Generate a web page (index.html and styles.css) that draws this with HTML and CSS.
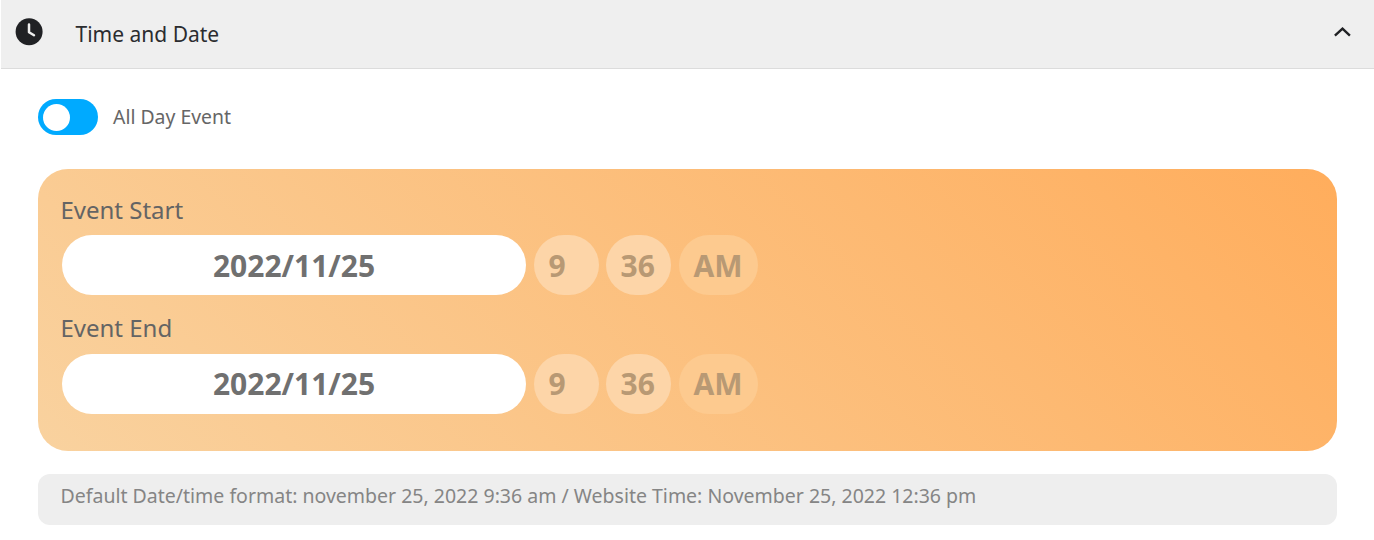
FILE: index.html
```html
<!DOCTYPE html>
<html lang="en">
<head>
<meta charset="utf-8">
<title>Time and Date</title>
<link rel="stylesheet" href="styles.css">
</head>
<body>
<section class="panel">
  <header class="panel-header">
    <svg class="clock" viewBox="0 0 28 28"><circle cx="14.1" cy="13.8" r="13.5" fill="#202124"/><path d="M14 6.6v7.6l5 3" fill="none" stroke="#efefef" stroke-width="2.5" stroke-linecap="round" stroke-linejoin="round"/></svg>
    <h1 class="title">Time and Date</h1>
    <svg class="chevron" viewBox="0 0 18 12"><path d="M1.9 9.6L9.5 2.6l7.4 7" fill="none" stroke="#202124" stroke-width="2.4"/></svg>
  </header>
  <div class="panel-body">
    <div class="all-day"><span class="switch"><span class="knob"></span></span><span class="all-day-label">All Day Event</span></div>
    <div class="times">
      <div class="label">Event Start</div>
      <div class="fields">
        <span class="date">2022/11/25</span><span class="unit">9</span><span class="unit">36</span><span class="unit meridiem">AM</span>
      </div>
      <div class="label label-end">Event End</div>
      <div class="fields fields-end">
        <span class="date">2022/11/25</span><span class="unit">9</span><span class="unit">36</span><span class="unit meridiem">AM</span>
      </div>
    </div>
    <div class="note">Default Date/time format: november 25, 2022 9:36 am / Website Time: November 25, 2022 12:36 pm</div>
  </div>
</section>
</body>
</html>
```
FILE: styles.css
```css
* { box-sizing: border-box; }
body { margin: 0; background: #fff; font-family: "Noto Sans", sans-serif; }
.panel { margin-left: 1px; }
.panel-header { display: flex; height: 69px; background: #efefef; border-bottom: 1px solid #dcdcdc; padding: 0 23px 0 14px; }
.clock { width: 28px; height: 28px; margin-top: 18px; }
.title { margin: 0 0 0 32.5px; font-size: 21px; line-height: 68px; font-weight: 400; color: #2b2c2f; }
.chevron { width: 18px; height: 12px; margin: 26px 0 0 auto; }
.panel-body { padding: 30px 37px 0; }
.all-day { display: flex; align-items: center; gap: 15px; height: 36px; }
.switch { width: 60px; height: 36px; border-radius: 18px; background: #00aaff; padding: 5px; }
.knob { display: block; width: 27px; height: 27px; border-radius: 50%; background: #fff; }
.all-day-label { font-size: 19.4px; line-height: 36px; color: #666; }
.times { height: 282px; margin-top: 34px; padding: 23px 24px; border-radius: 30px; background: linear-gradient(45deg, #f9d29f, #ffad5c); }
.label { height: 36px; margin-left: -1.6px; font-size: 24px; line-height: 36px; color: #646464; }
.label-end { line-height: 34px; }
.fields { display: flex; gap: 7px; height: 60px; margin: 7px 0 16px; line-height: 62px; }
.fields-end { line-height: 60px; }
.date { width: 464px; margin-right: 1px; border-radius: 30px; background: #fff; color: #707070; font-size: 30px; font-weight: 700; text-align: center; }
.unit { width: 65px; padding-left: 14.6px; border-radius: 30px; background: #fdd5a8; color: #b89974; font-size: 30px; font-weight: 700; }
.meridiem { width: 79px; margin-left: 1px; background: #fdca8f; }
.note { height: 51px; margin-top: 23px; padding-left: 22.5px; border-radius: 12px; background: #eee; color: #858585; font-size: 19.5px; line-height: 44px; }
```
